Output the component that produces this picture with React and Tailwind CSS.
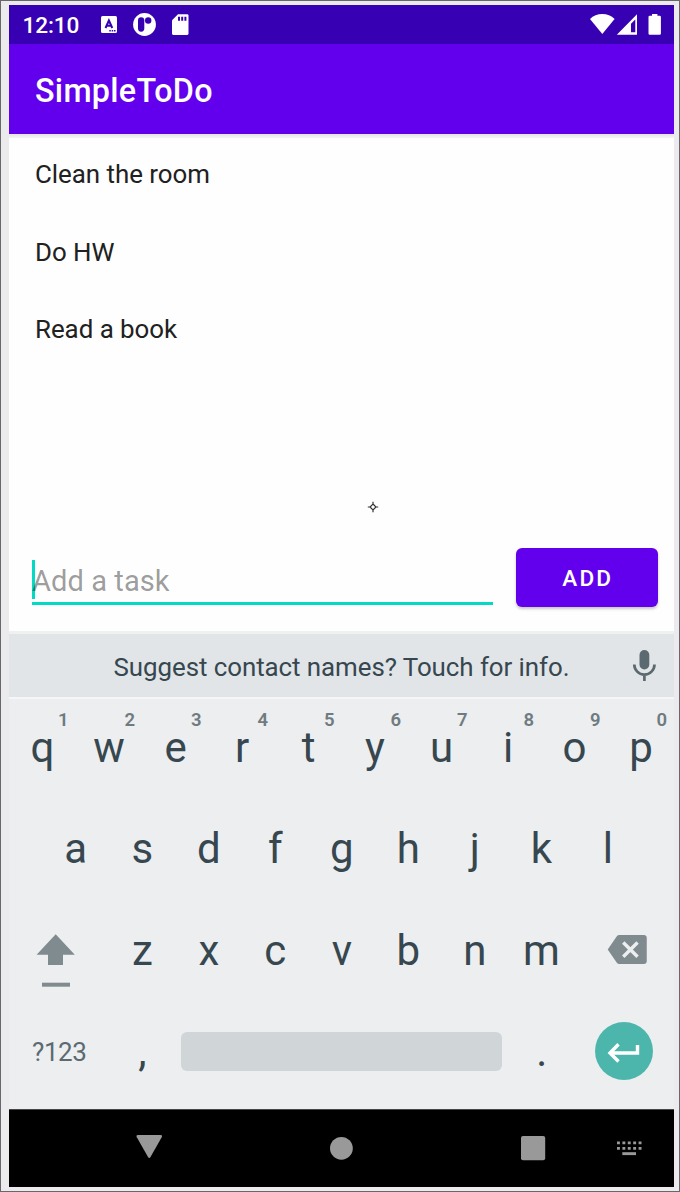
const ROW_ONE = [
  ["q", "1"], ["w", "2"], ["e", "3"], ["r", "4"], ["t", "5"],
  ["y", "6"], ["u", "7"], ["i", "8"], ["o", "9"], ["p", "0"],
];
const ROW_TWO = ["a", "s", "d", "f", "g", "h", "j", "k", "l"];
const ROW_THREE = ["z", "x", "c", "v", "b", "n", "m"];
const TASKS = ["Clean the room", "Do HW", "Read a book"];

function StatusBar() {
  return (
    <div className="flex h-[39px] shrink-0 items-center bg-[#3700b3] pl-[13.5px] text-white">
      <span className="w-[64.5px] pt-px text-[22.6px] leading-[39px] font-medium tracking-[-0.1px]">12:10</span>
      <svg className="h-[39px] w-[110px]" viewBox="87 5 110 39" fill="#fff">
        <rect x="101" y="16" width="16" height="17" rx="1.5" />
        <path d="M105.5 28 108.9 20.5 112.3 28M107 25.8h3.8" stroke="#3700b3" strokeWidth="2" fill="none" />
        <path d="M109.3 30h1.5v1.5h-1.5zM111.7 30h1.5v1.5h-1.5zM114 30h1.5v1.5H114z" fill="#3700b3" />
        <circle cx="144.5" cy="24.5" r="11.4" />
        <rect x="138" y="17.3" width="6.3" height="14.4" rx="3.1" fill="#3700b3" />
        <circle cx="148.2" cy="20.5" r="3.2" fill="#3700b3" />
        <path d="M178 14.3h9.2q1.3 0 1.3 1.3v18q0 1.3-1.3 1.3h-13.9q-1.3 0-1.3-1.3V20.3z" />
        <path d="M178 16.7h2v4h-2zM181.2 16.7h2v4h-2zM184.4 16.7h2v4h-2z" fill="#3700b3" />
      </svg>
      <svg className="ml-auto h-[39px] w-[90px]" viewBox="584 5 90 39" fill="#fff">
        <path d="M602.3 34 590 19q5-5 12.3-5t12.3 5z" />
        <path fillRule="evenodd" d="M637 14.2V34.8H616.8zM635.3 19.5 631 23.8V32.3h4.3z" />
        <path d="M652 14h5.4v1.8h2.3q1.2 0 1.2 1.2v16.6q0 1.2-1.2 1.2h-10q-1.2 0-1.2-1.2V17q0-1.2 1.2-1.2h2.3z" />
      </svg>
    </div>
  );
}

function Key({ label, hint }) {
  return (
    <div className="relative flex w-[66.5px] items-center justify-center pl-[0.6px] text-[42px] leading-none text-[#37474f]">
      {label}
      {hint && (
        <span className="absolute top-[11px] right-[7px] text-[18.5px] leading-[24px] font-semibold text-[#6f7b80]">
          {hint}
        </span>
      )}
    </div>
  );
}

function Keyboard() {
  return (
    <div className="flex h-[412px] shrink-0 flex-col border-t-2 border-[#f5f6f7] bg-[#eceef0]">
      <div className="-mt-[2px] flex h-[101.4px]">
        {ROW_ONE.map(([label, hint]) => <Key key={label} label={label} hint={hint} />)}
      </div>
      <div className="flex h-[101.4px] justify-center">
        {ROW_TWO.map((label) => <Key key={label} label={label} />)}
      </div>
      <div className="flex h-[101.4px]">
        <svg className="h-[101px] w-[99.75px]" viewBox="9 900 99.75 101" fill="#808b8f">
          <path d="M55.7 934.3 74.8 954.7H63V965H48V954.7H36.6z" />
          <path d="M42 982.7h28v4H42z" />
        </svg>
        <div className="flex pt-[2px]">
          {ROW_THREE.map((label) => <Key key={label} label={label} />)}
        </div>
        <svg className="h-[101px] w-[99.75px]" viewBox="574.25 900 99.75 101">
          <path d="M619.5 935H644q3 0 3 3v23q0 3-3 3H619.5q-1.5 0-2.4-1.3L608 949.5 617.1 936.3q.9-1.3 2.4-1.3z" fill="#808b8f" />
          <path d="M623.5 942.5 637.8 956.8M637.8 942.5 623.5 956.8" stroke="#eceef0" strokeWidth="3.4" />
        </svg>
      </div>
      <div className="-mt-[0.5px] flex h-[101.4px] items-center">
        <div className="w-[99.75px] pt-px pl-[23px] text-[26px] leading-none tracking-[-0.4px] text-[#5b6a71]">?123</div>
        <div className="flex pt-px"><Key label="," /></div>
        <div className="ml-[6px] h-[39px] w-[321px] rounded-[6px] bg-[#d0d5d8]" />
        <div className="ml-[6px] flex pt-px"><Key label="." /></div>
        <div className="ml-[20px] flex size-[58px] items-center justify-center rounded-full bg-[#4db6ac]">
          <svg className="size-[58px]" viewBox="595 1022 58 58" fill="none" stroke="#fff" strokeWidth="3.4">
            <path d="M637.5 1045V1053H610M618.5 1044.3 610 1053 618.5 1061.5" />
          </svg>
        </div>
      </div>
    </div>
  );
}

function NavigationBar() {
  return (
    <div className="h-[78px] shrink-0 border-t border-[#454545] bg-black">
      <svg className="h-[77px] w-[665px]" viewBox="9 1110 665 77" fill="#999">
        <path d="M138 1135H160.5Q162.8 1135 161.7 1137.2L150.5 1157Q149.3 1159 148 1157L136.8 1137.2Q135.7 1135 138 1135z" />
        <circle cx="341.4" cy="1148.3" r="11.4" />
        <rect x="521" y="1136" width="24.2" height="24.3" rx="2" />
        <path d="M617 1142.8H642M617 1148.3H642" stroke="#999" strokeWidth="2.8" strokeDasharray="2.9 2.5" />
        <path d="M622.3 1152.2h13.7v2.9h-13.7z" />
      </svg>
    </div>
  );
}

export default function App() {
  return (
    <div className="h-[1192px] w-[680px] overflow-hidden border border-[#69676b] bg-[#ebeaed] pt-[4px] pl-[8px] font-[Roboto,sans-serif]">
      <div className="flex h-[1182px] w-[665px] flex-col bg-[#fefefe]">
        <StatusBar />
        <header className="flex h-[90px] shrink-0 items-center bg-[#6200ee] pt-[5px] pl-[26px] text-[32.3px] font-medium tracking-[0.3px] text-white">
          SimpleToDo
        </header>
        <div className="h-[4px] shrink-0 bg-linear-to-b from-[#e6e6e6] to-[#f4f4f4]" />
        <main className="flex h-[493px] shrink-0 flex-col">
          <ul className="-mt-[2px] h-[233px] shrink-0">
            {TASKS.map((task) => (
              <li key={task} className="flex h-[77.4px] items-center pl-[26px] text-[25.9px] tracking-[-0.03px] text-[#212121]">
                {task}
              </li>
            ))}
          </ul>
          <svg className="mt-[132px] ml-[358px] size-[12px] shrink-0" viewBox="0 0 12 12" fill="none" stroke="#333" strokeWidth="1.2">
            <path d="M6 3 9 6 6 9 3 6zM6 .8V3M6 9v2.2M.8 6H3M9 6h2.2" />
          </svg>
          <div className="mt-[35px] flex shrink-0 items-start pl-[23px]">
            <div className="mt-[12px] flex h-[45px] w-[461px] items-start border-b-[3px] border-[#03dac5]">
              <span className="h-[39px] w-[3px] bg-[#03dac5]" />
              <span className="-ml-[3px] text-[29.1px] leading-[42px] tracking-[0.05px] text-[#000]/40">Add a task</span>
            </div>
            <button className="ml-[22.5px] h-[58.5px] w-[142.5px] rounded-[6px] bg-[#6200ee] pt-[3px] pl-[2px] text-[22.6px] font-medium tracking-[2.2px] text-white shadow-[0_2px_3px_rgba(0,0,0,0.22)]">
              ADD
            </button>
          </div>
        </main>
        <div className="flex h-[66px] shrink-0 items-center border-t-[3px] border-[#eff0f0] bg-[#e1e5e8] pl-[104.5px] text-[#37474f]">
          <span className="grow pt-[4px] text-[25.9px] tracking-[-0.06px] whitespace-nowrap">Suggest contact names? Touch for info.</span>
          <svg className="h-[63px] w-[60px] shrink-0" viewBox="614 634 60 63" fill="#5b6a71">
            <rect x="639.5" y="650" width="9.8" height="19.5" rx="4.9" />
            <path d="M634.3 664.5a10.1 10.1 0 0 0 20.2 0M644.4 674V681" fill="none" stroke="#5b6a71" strokeWidth="2.7" />
          </svg>
        </div>
        <Keyboard />
        <NavigationBar />
      </div>
    </div>
  );
}
